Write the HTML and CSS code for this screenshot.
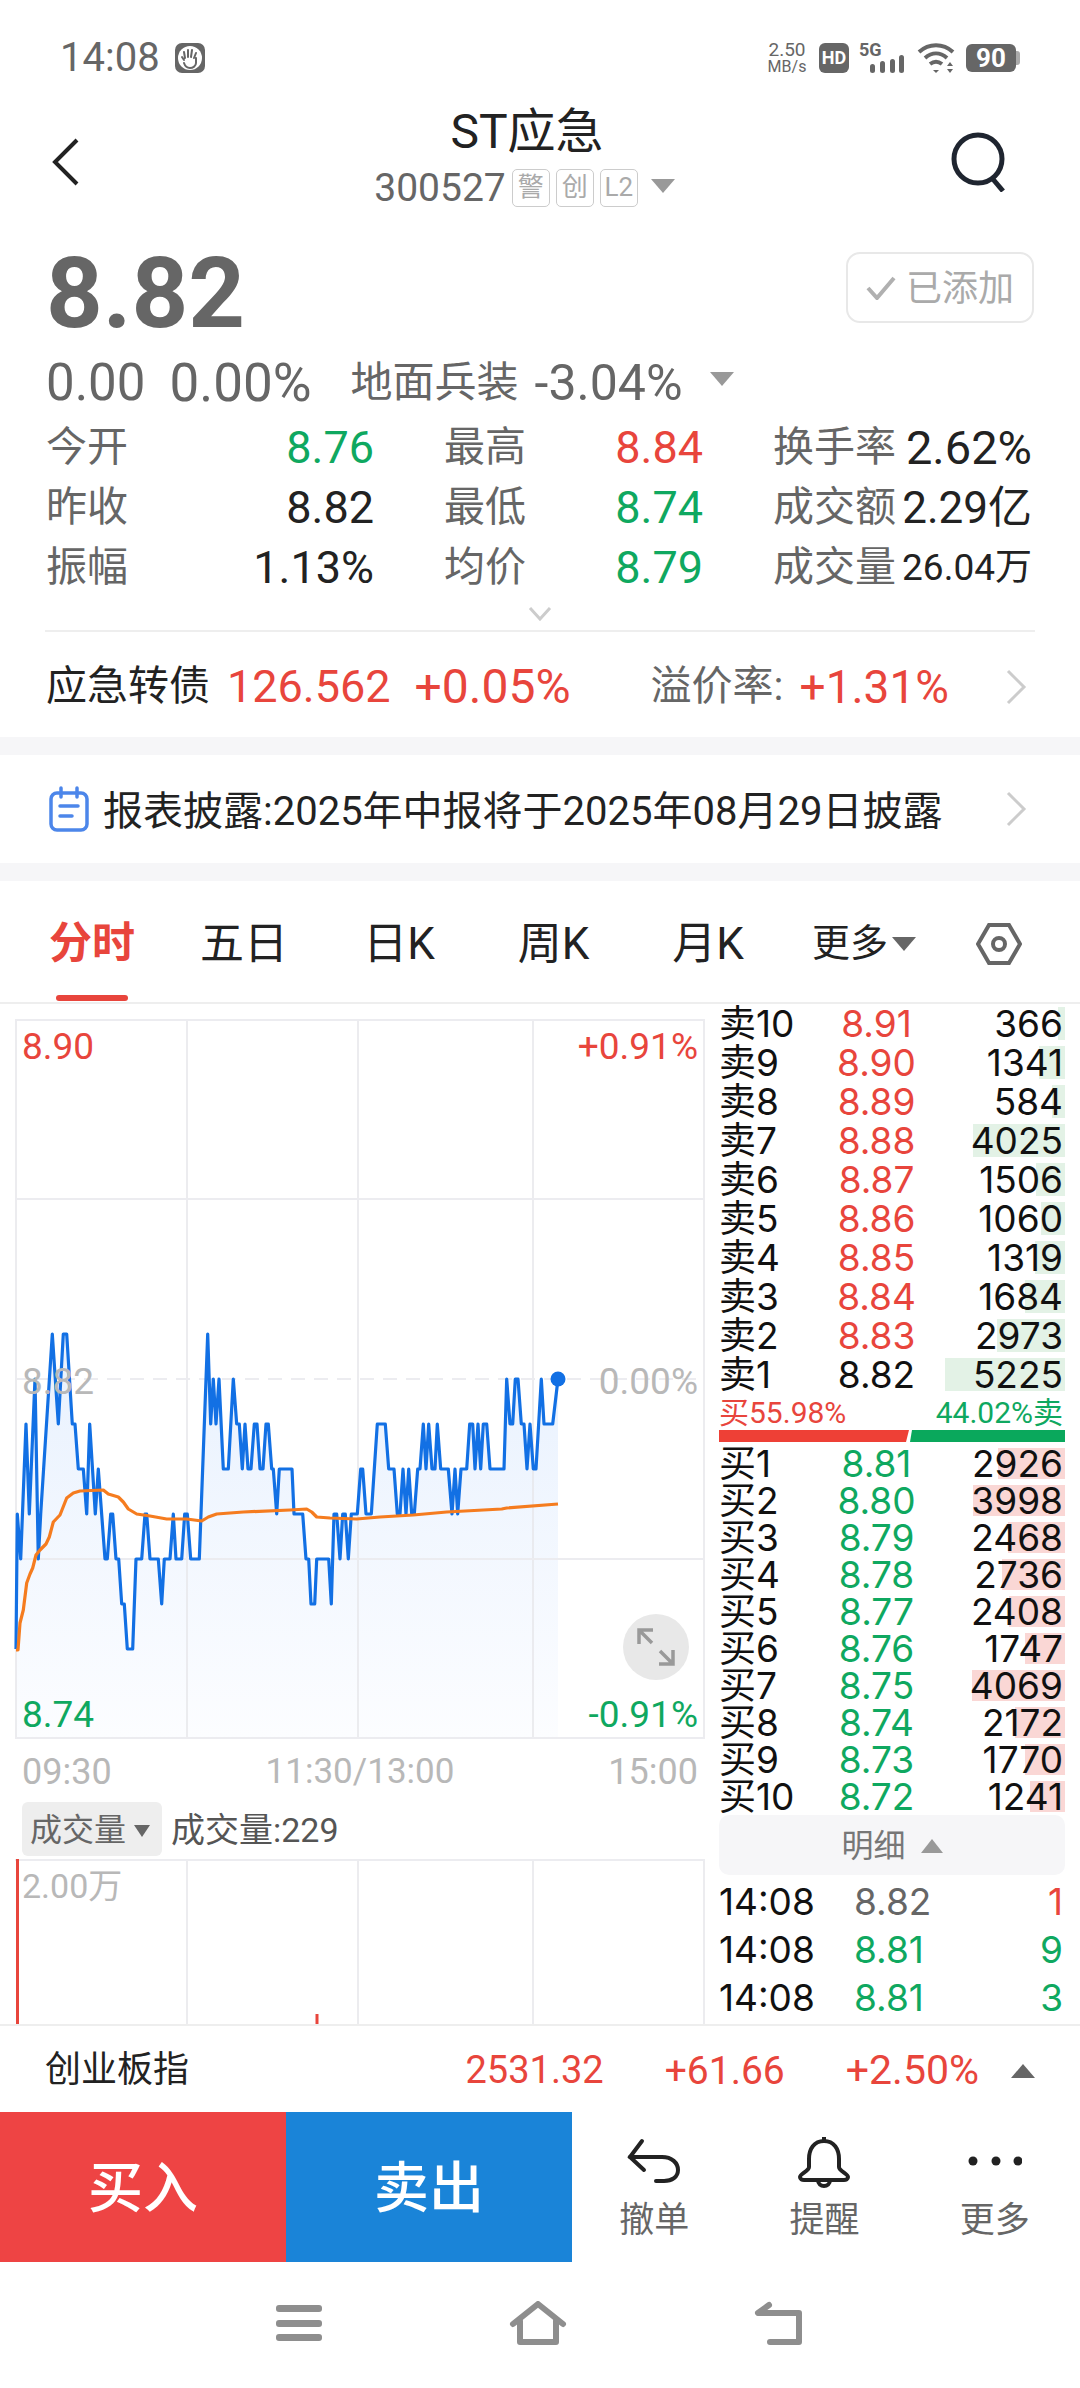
FILE: index.html
```html
<!DOCTYPE html>
<html lang="zh-CN">
<head>
  <meta charset="UTF-8">
  <meta name="viewport" content="width=device-width, initial-scale=1.0">
  <title>ST应急 300527</title>
  <link rel="stylesheet" href="styles.css">
</head>
<body>

  <!-- Status bar -->
  <div class="status-bar">
    <div class="status-left">
      <span class="clock">14:08</span>
      <svg class="hand-icon" width="30" height="30" viewBox="0 0 30 30">
        <rect width="30" height="30" rx="7" fill="#666"/>
        <circle cx="15" cy="15" r="12" fill="#fff"/>
        <path d="M9 17l-2-3M10 15l-1-6M13 14l0-7M16 14l1-7M19 15l2-5M21 15v5c0 3-3 5-6 5-3 0-5-2-6-5" fill="none" stroke="#666" stroke-width="2" stroke-linecap="round"/>
      </svg>
    </div>
    <div class="status-right">
      <div class="speed"><span>2.50</span><span>MB/s</span></div>
      <span class="hd">HD</span>
      <div class="signal">
        <span class="five-g">5G</span>
        <svg width="36" height="18" viewBox="0 0 36 18" fill="#666">
          <rect x="1" y="9" width="5" height="9" rx="2.5"/>
          <rect x="11" y="6" width="5" height="12" rx="2.5"/>
          <rect x="21" y="4" width="5" height="14" rx="2.5"/>
          <rect x="30" y="0" width="5" height="18" rx="2.5"/>
        </svg>
      </div>
      <svg class="wifi" width="38" height="30" viewBox="0 0 38 30" fill="none" stroke="#666" stroke-width="4">
        <path d="M2 9c10-9 24-9 34 0"/>
        <path d="M8 15c7-6 15-6 22 0"/>
        <path d="M13 21c4-3 8-3 12 0"/>
        <path d="M16 27l3 3 3-3z" fill="#666" stroke="none"/>
        <path d="M30 23l3-4 3 4zM30 26l3 4 3-4z" fill="#666" stroke="none"/>
      </svg>
      <div class="battery"><span class="battery-body">90</span><i class="battery-cap"></i></div>
    </div>
  </div>

  <!-- Title bar -->
  <header class="title-bar">
    <svg class="back" width="44" height="48" viewBox="0 0 44 48">
      <path d="M25 2L3 24l22 22" fill="none" stroke="#222" stroke-width="4"/>
    </svg>
    <div class="title-center">
      <div class="stock-name">ST应急</div>
      <div class="stock-code">
        <span>300527</span>
        <span class="tag">警</span>
        <span class="tag">创</span>
        <span class="tag">L2</span>
        <i class="tri tri-down code-tri"></i>
      </div>
    </div>
    <svg class="search" width="57" height="60" viewBox="0 0 57 60" fill="none" stroke="#1f2530" stroke-width="5">
      <circle cx="27" cy="27" r="24"/>
      <path d="M41 46l11 13"/>
    </svg>
  </header>

  <!-- Quote summary -->
  <section class="quote">
    <div class="price-row">
      <span class="last-price">8.82</span>
      <button class="added-btn">
        <svg width="30" height="24" viewBox="0 0 30 24"><path d="M2 12l9 10L28 2" fill="none" stroke="#b0b0b0" stroke-width="4"/></svg>
        <span class="added-text">已添加</span>
      </button>
    </div>
    <div class="change-row">
      <span class="chg">0.00</span>
      <span class="chg-pct">0.00%</span>
      <span class="sector">地面兵装</span>
      <span class="sector-pct">-3.04%</span>
      <i class="tri tri-down sector-tri"></i>
    </div>
    <div class="stats">
      <div class="stat"><span class="stat-label">今开</span><span class="green">8.76</span></div>
      <div class="stat"><span class="stat-label">最高</span><span class="red">8.84</span></div>
      <div class="stat"><span class="stat-label">换手率</span><span class="stat-pct">2.62%</span></div>
      <div class="stat"><span class="stat-label">昨收</span><span>8.82</span></div>
      <div class="stat"><span class="stat-label">最低</span><span class="green">8.74</span></div>
      <div class="stat"><span class="stat-label">成交额</span><span class="stat-mid">2.29亿</span></div>
      <div class="stat"><span class="stat-label">振幅</span><span>1.13%</span></div>
      <div class="stat"><span class="stat-label">均价</span><span class="green">8.79</span></div>
      <div class="stat"><span class="stat-label">成交量</span><span class="stat-small">26.04万</span></div>
    </div>
    <div class="more-stats">
      <svg width="24" height="14" viewBox="0 0 24 14"><path d="M2 1l10 11L22 1" fill="none" stroke="#ccc" stroke-width="3"/></svg>
    </div>
  </section>

  <!-- Convertible bond -->
  <section class="bond-row">
    <span class="bond-name">应急转债</span>
    <span class="red bond-price">126.562</span>
    <span class="red bond-pct">+0.05%</span>
    <span class="bond-label">溢价率:</span>
    <span class="red bond-premium">+1.31%</span>
    <svg class="chevron" width="22" height="36" viewBox="0 0 22 36"><path d="M3 2l16 16L3 34" fill="none" stroke="#ccc" stroke-width="3"/></svg>
  </section>

  <!-- Report notice -->
  <section class="notice-row">
    <svg width="42" height="46" viewBox="0 0 42 46" fill="none" stroke="#4c86ea" stroke-width="3.5" stroke-linecap="round">
      <rect x="3" y="7" width="36" height="37" rx="6"/>
      <path d="M13 2v9M29 2v9"/>
      <path d="M12 20h18M12 30h12"/>
    </svg>
    <span class="notice-text">报表披露:2025年中报将于2025年08月29日披露</span>
    <svg class="chevron" width="22" height="36" viewBox="0 0 22 36"><path d="M3 2l16 16L3 34" fill="none" stroke="#ccc" stroke-width="3"/></svg>
  </section>

  <!-- Period tabs -->
  <nav class="tabs">
    <span class="tab tab-active">分时</span>
    <span class="tab">五日</span>
    <span class="tab">日K</span>
    <span class="tab">周K</span>
    <span class="tab">月K</span>
    <span class="tab tab-more">更多<i class="tri tri-down more-tri"></i></span>
    <span class="tab">
      <svg width="46" height="42" viewBox="0 0 46 42" fill="none" stroke="#666" stroke-width="4">
        <path d="M13 2h20l11 19-11 19H13L2 21z"/>
        <circle cx="23" cy="21" r="6"/>
      </svg>
    </span>
  </nav>

  <section class="market">
    <div class="chart-col">
      <div class="plot">
        <svg width="700" height="720" viewBox="10 1019 700 720">
          <defs>
            <linearGradient id="areaFill" gradientUnits="userSpaceOnUse" x1="0" y1="1334" x2="0" y2="1738">
              <stop offset="0" stop-color="#e8f1fe"/>
              <stop offset="1" stop-color="#fcfdff"/>
            </linearGradient>
          </defs>
          <!-- area under the price line -->
          <polygon fill="url(#areaFill)" points="16,1738 16,1649 17.3,1514 20.7,1559 26,1424 29.3,1514 35,1379 38.3,1559 40.7,1514 52.3,1334 58.3,1424 63.3,1334 66.7,1334 72.3,1424 75,1424 78.3,1469 83.3,1469 86.7,1514 89.7,1424 95.3,1514 98.3,1469 105,1559 107.3,1559 110.7,1514 112.7,1514 116,1559 118.7,1559 121.7,1604 124.3,1604 127.3,1649 132.7,1649 136,1559 141.7,1559 145,1514 146.7,1514 150,1559 158.3,1559 161.7,1604 164.3,1559 170,1559 173.3,1514 176,1559 181.7,1559 184.7,1514 187.3,1514 190.7,1559 199.3,1559 207.7,1334 210.7,1424 213.3,1379 216,1424 219,1379 223.3,1469 228.3,1469 233.3,1379 236.7,1424 239.3,1424 242.3,1469 245,1424 248,1469 251,1469 254.3,1424 257,1424 260,1469 263,1469 266,1424 268.3,1424 271.7,1469 273.3,1469 276.7,1514 279.3,1469 292,1469 294,1514 302.7,1514 306,1559 308.7,1559 311,1604 314.7,1604 316.7,1559 328.7,1559 331.3,1604 334,1514 336.7,1514 340,1559 342.7,1514 345.3,1514 348.3,1559 351.3,1514 357.3,1514 360.7,1469 362.7,1469 366,1514 371.3,1514 377.3,1424 385.3,1424 388.7,1469 394,1469 397.3,1514 400,1514 403,1469 406,1514 408.7,1469 411.7,1514 414.3,1514 417.7,1469 420,1469 423.3,1424 426,1469 428.7,1424 432,1469 435,1469 437.3,1424 440.7,1469 448.3,1469 452,1514 455,1469 457.7,1514 461,1469 466.7,1469 469.7,1424 472.7,1424 475,1469 478,1424 480.7,1469 483.3,1424 486.7,1424 490,1469 504,1469 506.7,1379 510,1424 512.7,1424 515.3,1379 518,1379 521.3,1424 524,1424 527,1469 530,1424 533.3,1469 536,1469 541.3,1379 544,1424 552.7,1424 558,1379 558,1738"/>
          <!-- grid -->
          <g stroke="#e6e6ea" stroke-width="1.5">
            <path d="M16 1020V1738M187 1020V1738M358 1020V1738M533 1020V1738M704 1020V1738"/>
          </g>
          <g stroke="#ececf0" stroke-width="2">
            <path d="M15 1020H705M15 1199H705M15 1559H705M15 1738H705"/>
            <path d="M15 1379H705" stroke-dasharray="14 9"/>
          </g>
          <!-- price -->
          <polyline fill="none" stroke="#1270e4" stroke-width="3.2" stroke-linejoin="round" points="16,1649 17.3,1514 20.7,1559 26,1424 29.3,1514 35,1379 38.3,1559 40.7,1514 52.3,1334 58.3,1424 63.3,1334 66.7,1334 72.3,1424 75,1424 78.3,1469 83.3,1469 86.7,1514 89.7,1424 95.3,1514 98.3,1469 105,1559 107.3,1559 110.7,1514 112.7,1514 116,1559 118.7,1559 121.7,1604 124.3,1604 127.3,1649 132.7,1649 136,1559 141.7,1559 145,1514 146.7,1514 150,1559 158.3,1559 161.7,1604 164.3,1559 170,1559 173.3,1514 176,1559 181.7,1559 184.7,1514 187.3,1514 190.7,1559 199.3,1559 207.7,1334 210.7,1424 213.3,1379 216,1424 219,1379 223.3,1469 228.3,1469 233.3,1379 236.7,1424 239.3,1424 242.3,1469 245,1424 248,1469 251,1469 254.3,1424 257,1424 260,1469 263,1469 266,1424 268.3,1424 271.7,1469 273.3,1469 276.7,1514 279.3,1469 292,1469 294,1514 302.7,1514 306,1559 308.7,1559 311,1604 314.7,1604 316.7,1559 328.7,1559 331.3,1604 334,1514 336.7,1514 340,1559 342.7,1514 345.3,1514 348.3,1559 351.3,1514 357.3,1514 360.7,1469 362.7,1469 366,1514 371.3,1514 377.3,1424 385.3,1424 388.7,1469 394,1469 397.3,1514 400,1514 403,1469 406,1514 408.7,1469 411.7,1514 414.3,1514 417.7,1469 420,1469 423.3,1424 426,1469 428.7,1424 432,1469 435,1469 437.3,1424 440.7,1469 448.3,1469 452,1514 455,1469 457.7,1514 461,1469 466.7,1469 469.7,1424 472.7,1424 475,1469 478,1424 480.7,1469 483.3,1424 486.7,1424 490,1469 504,1469 506.7,1379 510,1424 512.7,1424 515.3,1379 518,1379 521.3,1424 524,1424 527,1469 530,1424 533.3,1469 536,1469 541.3,1379 544,1424 552.7,1424 558,1379"/>
          <!-- average -->
          <polyline fill="none" stroke="#f57c1f" stroke-width="3.2" stroke-linejoin="round" points="16,1650 18,1650 20,1623 23.3,1610 26.7,1583 30,1574 32.7,1568 36,1555 40,1550 46,1544 49.3,1537 53.3,1522 60,1515 66.7,1498 73.3,1493 80,1491 103.3,1490 108.3,1494 118.3,1497 123.3,1502 128.3,1509 136.7,1514 150,1516 166.7,1519 186.7,1519 201.7,1521 208.3,1517 216.7,1514 243.3,1512 290,1510 306.7,1509 311.7,1512 316.7,1517 330,1518 356.7,1519 380,1517 413.3,1515 446.7,1512 501.7,1509 506.7,1508 558,1504"/>
          <circle cx="558" cy="1379" r="7.5" fill="#1270e4"/>
        </svg>
        <span class="axis-label top-left red">8.90</span>
        <span class="axis-label top-right red">+0.91%</span>
        <span class="axis-label mid-left muted">8.82</span>
        <span class="axis-label mid-right muted">0.00%</span>
        <span class="axis-label low-left green">8.74</span>
        <span class="axis-label low-right green">-0.91%</span>
        <div class="expand-btn">
          <svg width="38" height="38" viewBox="0 0 38 38" fill="none" stroke="#999" stroke-width="3.5">
            <path d="M2 16V2h14M2 2l13 13"/>
            <path d="M36 22v14H22M36 36L23 23"/>
          </svg>
        </div>
      </div>
      <div class="time-axis">
        <span>09:30</span>
        <span class="time-mid">11:30/13:00</span>
        <span>15:00</span>
      </div>
      <div class="vol-head">
        <span class="vol-select">成交量<i class="tri tri-down vol-tri"></i></span>
        <span class="vol-value">成交量:229</span>
      </div>
      <div class="vol-plot">
        <svg width="700" height="165" viewBox="10 1859 700 165">
          <path d="M187 1859V2024M358 1859V2024M533 1859V2024M704 1859V2024" stroke="#e6e6ea" stroke-width="1.5"/>
          <path d="M15 1860H705" stroke="#ececf0" stroke-width="2"/>
          <path d="M17.5 1859V2024" stroke="#e8453c" stroke-width="3"/>
          <path d="M317 2014V2024" stroke="#e8453c" stroke-width="3"/>
        </svg>
        <span class="vol-max">2.00万</span>
      </div>
    </div>

    <div class="book">
      <ul class="asks">
        <li class="book-row"><i class="qty-bar" style="width:7px"></i><span class="lvl">卖10</span><span class="px red">8.91</span><span class="qty">366</span></li>
        <li class="book-row"><i class="qty-bar" style="width:26px"></i><span class="lvl">卖9</span><span class="px red">8.90</span><span class="qty">1341</span></li>
        <li class="book-row"><i class="qty-bar" style="width:13px"></i><span class="lvl">卖8</span><span class="px red">8.89</span><span class="qty">584</span></li>
        <li class="book-row"><i class="qty-bar" style="width:92px"></i><span class="lvl">卖7</span><span class="px red">8.88</span><span class="qty">4025</span></li>
        <li class="book-row"><i class="qty-bar" style="width:29px"></i><span class="lvl">卖6</span><span class="px red">8.87</span><span class="qty">1506</span></li>
        <li class="book-row"><i class="qty-bar" style="width:24px"></i><span class="lvl">卖5</span><span class="px red">8.86</span><span class="qty">1060</span></li>
        <li class="book-row"><i class="qty-bar" style="width:30px"></i><span class="lvl">卖4</span><span class="px red">8.85</span><span class="qty">1319</span></li>
        <li class="book-row"><i class="qty-bar" style="width:40px"></i><span class="lvl">卖3</span><span class="px red">8.84</span><span class="qty">1684</span></li>
        <li class="book-row"><i class="qty-bar" style="width:68px"></i><span class="lvl">卖2</span><span class="px red">8.83</span><span class="qty">2973</span></li>
        <li class="book-row"><i class="qty-bar" style="width:120px"></i><span class="lvl">卖1</span><span class="px">8.82</span><span class="qty">5225</span></li>
      </ul>
      <div class="ratio-text">
        <span class="red">买55.98%</span>
        <span class="green">44.02%卖</span>
      </div>
      <div class="ratio-bar">
        <i class="ratio-buy" style="width:190px"></i>
        <i class="ratio-sell"></i>
      </div>
      <ul class="bids">
        <li class="book-row"><i class="qty-bar" style="width:67px"></i><span class="lvl">买1</span><span class="px green">8.81</span><span class="qty">2926</span></li>
        <li class="book-row"><i class="qty-bar" style="width:92px"></i><span class="lvl">买2</span><span class="px green">8.80</span><span class="qty">3998</span></li>
        <li class="book-row"><i class="qty-bar" style="width:57px"></i><span class="lvl">买3</span><span class="px green">8.79</span><span class="qty">2468</span></li>
        <li class="book-row"><i class="qty-bar" style="width:63px"></i><span class="lvl">买4</span><span class="px green">8.78</span><span class="qty">2736</span></li>
        <li class="book-row"><i class="qty-bar" style="width:56px"></i><span class="lvl">买5</span><span class="px green">8.77</span><span class="qty">2408</span></li>
        <li class="book-row"><i class="qty-bar" style="width:40px"></i><span class="lvl">买6</span><span class="px green">8.76</span><span class="qty">1747</span></li>
        <li class="book-row"><i class="qty-bar" style="width:93px"></i><span class="lvl">买7</span><span class="px green">8.75</span><span class="qty">4069</span></li>
        <li class="book-row"><i class="qty-bar" style="width:50px"></i><span class="lvl">买8</span><span class="px green">8.74</span><span class="qty">2172</span></li>
        <li class="book-row"><i class="qty-bar" style="width:40px"></i><span class="lvl">买9</span><span class="px green">8.73</span><span class="qty">1770</span></li>
        <li class="book-row"><i class="qty-bar" style="width:35px"></i><span class="lvl">买10</span><span class="px green">8.72</span><span class="qty">1241</span></li>
      </ul>
      <div class="detail-toggle">明细<i class="tri tri-up detail-tri"></i></div>
      <div class="trades">
        <div class="trade"><span class="trade-time">14:08</span><span class="trade-px gray">8.82</span><span class="trade-qty red">1</span></div>
        <div class="trade"><span class="trade-time">14:08</span><span class="trade-px green">8.81</span><span class="trade-qty green">9</span></div>
        <div class="trade"><span class="trade-time">14:08</span><span class="trade-px green">8.81</span><span class="trade-qty green">3</span></div>
      </div>
    </div>
  </section>

  <!-- Index ticker -->
  <section class="index-row">
    <span class="index-name">创业板指</span>
    <span class="red index-first">2531.32</span>
    <span class="red index-chg">+61.66</span>
    <span class="red index-pct">+2.50%</span>
    <i class="tri tri-up index-tri"></i>
  </section>

  <!-- Trade actions -->
  <section class="actions">
    <button class="trade-btn buy">买入</button>
    <button class="trade-btn sell">卖出</button>
    <div class="tools">
      <div class="tool">
        <svg width="54" height="44" viewBox="0 0 54 44" fill="none" stroke="#222" stroke-width="4" stroke-linecap="round">
          <path d="M15 2L3 18l14 13"/>
          <path d="M3 18h32c10 0 16 6 16 13s-6 11-14 11h-8"/>
        </svg>
        <span>撤单</span>
      </div>
      <div class="tool">
        <svg width="52" height="54" viewBox="0 0 52 54" fill="none" stroke="#222" stroke-width="4">
          <path d="M26 7c-10 0-15 8-15 18v8c0 4-9 7-9 10 0 2 2 3 4 3h40c2 0 4-1 4-3 0-3-9-6-9-10v-8c0-10-5-18-15-18z"/>
          <path d="M26 7V3"/>
          <path d="M20 46c0 4 3 6 6 6s6-2 6-6"/>
        </svg>
        <span>提醒</span>
      </div>
      <div class="tool">
        <svg width="54" height="44" viewBox="0 0 54 44" fill="#222">
          <circle cx="5" cy="22" r="4.5"/>
          <circle cx="28" cy="22" r="4.5"/>
          <circle cx="50" cy="22" r="4.5"/>
        </svg>
        <span>更多</span>
      </div>
    </div>
  </section>

  <!-- System navigation -->
  <footer class="sys-nav">
    <svg width="46" height="36" viewBox="0 0 46 36" fill="#8e8e8e">
      <rect width="46" height="7" rx="3"/>
      <rect y="15" width="46" height="7" rx="3"/>
      <rect y="29" width="46" height="7" rx="3"/>
    </svg>
    <svg width="58" height="44" viewBox="0 0 58 44" fill="none" stroke="#8e8e8e" stroke-width="6" stroke-linejoin="round" stroke-linecap="round">
      <path d="M4 23L29 3l25 20"/>
      <path d="M11 20v21h36V20"/>
    </svg>
    <svg width="50" height="44" viewBox="0 0 50 44" fill="none" stroke="#8e8e8e" stroke-width="6" stroke-linejoin="round" stroke-linecap="round">
      <path d="M15 4L4 12h41v29H16"/>
    </svg>
  </footer>

</body>
</html>
```

FILE: styles.css
```css
* {
  box-sizing: border-box;
}

html, body {
  margin: 0;
  padding: 0;
  width: 1080px;
  height: 2388px;
  overflow: hidden;
  background-color: #fff;
  color: #222;
  font-family: Roboto, "Noto Sans CJK SC", sans-serif;
  line-height: 1.1;
}

ul {
  list-style: none;
  margin: 0;
  padding: 0;
}

button {
  font-family: inherit;
  line-height: 1.1;
  border: none;
  cursor: pointer;
}

.red { color: #e8453c; }
.green { color: #0fa860; }
.gray { color: #666; }
.muted { color: #b8b8b8; }

/* little triangles used all over */
.tri {
  display: inline-block;
  width: 0;
  height: 0;
  border-left: 12px solid transparent;
  border-right: 12px solid transparent;
}

.tri-down { border-top: 14px solid #999; }
.tri-up { border-bottom: 14px solid #999; }

/* status bar */
.status-bar {
  height: 84px;
  padding: 32px 60px 0;
  display: flex;
  justify-content: space-between;
  align-items: center;
}

.status-left {
  display: flex;
  align-items: center;
  gap: 15px;
}

.clock {
  font-size: 40px;
  color: #666;
}

.status-right {
  display: flex;
  align-items: center;
  color: #666;
}

.speed {
  display: flex;
  flex-direction: column;
  align-items: center;
  font-size: 16px;
  line-height: 16px;
  width: 42px;
}

.speed span:first-child {
  font-size: 19px;
  line-height: 18px;
}

.hd {
  margin-left: 11px;
  width: 30px;
  height: 30px;
  line-height: 30px;
  background-color: #666;
  color: #fff;
  border-radius: 6px;
  font-size: 18px;
  font-weight: 700;
  text-align: center;
}

.signal {
  margin-left: 10px;
  width: 46px;
  height: 30px;
  position: relative;
}

.five-g {
  position: absolute;
  left: 0;
  top: -2px;
  font-size: 18px;
  line-height: 18px;
  font-weight: 700;
}

.signal svg {
  position: absolute;
  left: 10px;
  top: 12px;
}

.wifi {
  margin-left: 12px;
}

.battery {
  margin-left: 11px;
  display: flex;
  align-items: center;
}

.battery-body {
  width: 50px;
  height: 28px;
  line-height: 28px;
  background-color: #666;
  color: #fff;
  border-radius: 6px;
  font-size: 26px;
  font-weight: 700;
  text-align: center;
}

.battery-cap {
  width: 4px;
  height: 14px;
  background-color: #aaa;
  border-radius: 0 3px 3px 0;
}

/* title bar */
.title-bar {
  height: 154px;
  padding: 20px 72px 0 52px;
  display: flex;
  justify-content: space-between;
  align-items: flex-start;
}

.back {
  margin-top: 34px;
}

.search {
  margin-top: 28px;
}

.title-center {
  flex: 1;
  padding-left: 2px;
  text-align: center;
}

.stock-name {
  margin-top: 3px;
  padding-left: 5px;
  font-size: 48px;
  line-height: 50px;
  color: #222;
}

.stock-code {
  margin-top: 9px;
  height: 44px;
  display: flex;
  justify-content: center;
  align-items: center;
  gap: 6px;
  font-size: 39px;
  color: #666;
}

.tag {
  width: 38px;
  height: 38px;
  line-height: 34px;
  border: 1.5px solid #ccc;
  border-radius: 5px;
  font-size: 26px;
  color: #aaa;
  text-align: center;
}

.code-tri {
  margin-left: 7px;
  margin-bottom: 4px;
}

/* quote summary */
.quote {
  padding: 0 46px;
}

.price-row {
  height: 110px;
  display: flex;
  justify-content: space-between;
  align-items: center;
}

.last-price {
  font-size: 99px;
  line-height: 110px;
  font-weight: 700;
  color: #666;
}

.added-btn {
  width: 188px;
  height: 71px;
  margin-bottom: 11px;
  background-color: #fff;
  border: 2px solid #e8e8e8;
  border-radius: 14px;
  display: flex;
  align-items: center;
  justify-content: center;
  gap: 10px;
  font-size: 36px;
  color: #aaa;
}

.added-text {
  padding-top: 4px;
}

.change-row {
  height: 70px;
  display: flex;
  align-items: center;
  color: #666;
}

.chg {
  font-size: 51px;
}

.chg-pct {
  margin-left: 24px;
  font-size: 53px;
}

.sector {
  margin-left: 39px;
  font-size: 42px;
}

.sector-pct {
  margin-left: 16px;
  font-size: 50px;
}

.sector-tri {
  margin-left: 27px;
  margin-bottom: 8px;
}

.stats {
  display: grid;
  grid-template-columns: 328px 259px 259px;
  column-gap: 70px;
  font-size: 45px;
}

.stat {
  height: 60px;
  display: flex;
  justify-content: space-between;
  align-items: center;
}

.stat-label {
  font-size: 41px;
  color: #666;
}

.stat-pct {
  font-size: 47px;
}

.stat-mid {
  font-size: 44px;
}

.stat-small {
  font-size: 37px;
}

.more-stats {
  height: 32px;
  display: flex;
  justify-content: center;
  align-items: center;
}

/* bond row */
.bond-row {
  margin: 0 45px;
  height: 107px;
  padding-top: 5px;
  border-top: 2px solid #eee;
  display: flex;
  align-items: center;
  font-size: 46px;
}

.bond-name {
  font-size: 41px;
  margin-left: 1px;
}

.bond-price {
  margin-left: 17px;
  font-size: 45px;
}

.bond-pct {
  margin-left: 24px;
  font-size: 48px;
}

.bond-label {
  margin-left: 80px;
  font-size: 41px;
  color: #666;
}

.bond-premium {
  margin-left: 16px;
}

.bond-row .chevron {
  margin-left: auto;
  margin-right: 8px;
}

/* notice row */
.notice-row {
  height: 144px;
  padding: 0 53px 0 48px;
  border-top: 18px solid #f6f6f8;
  border-bottom: 18px solid #f6f6f8;
  display: flex;
  align-items: center;
}

.notice-text {
  margin-left: 13px;
  padding-top: 5px;
  font-size: 40px;
  white-space: nowrap;
}

.notice-row .chevron {
  margin-left: auto;
}

/* tabs */
.tabs {
  height: 123px;
  padding-left: 16px;
  border-bottom: 2px solid #eee;
  display: grid;
  grid-template-columns: 152px 152px 158px 151px 158px 154px 116px;
  align-items: center;
  font-size: 44px;
}

.tab {
  height: 100%;
  padding-top: 5px;
  display: flex;
  align-items: center;
  justify-content: center;
  position: relative;
}

.tab-active {
  color: #e8453c;
  font-size: 43px;
  font-weight: 700;
}

.tab-active::after {
  content: "";
  position: absolute;
  left: 40px;
  bottom: 1px;
  width: 72px;
  height: 6px;
  background-color: #e8453c;
  border-radius: 3px;
}

.tab-more {
  font-size: 38px;
}

.more-tri {
  margin-left: 4px;
  border-top-color: #666;
}

/* chart and order book */
.market {
  height: 1020px;
  display: flex;
}

.chart-col {
  width: 719px;
  padding-top: 15px;
  padding-left: 10px;
}

.plot {
  width: 700px;
  height: 720px;
  position: relative;
}

.plot svg {
  display: block;
}

.axis-label {
  position: absolute;
  font-size: 37px;
  line-height: 40px;
}

.top-left { left: 12px; top: 8px; }
.top-right { right: 12px; top: 8px; }
.mid-left { left: 12px; top: 343px; }
.mid-right { right: 12px; top: 343px; }
.low-left { left: 12px; top: 676px; }
.low-right { right: 12px; top: 676px; }

.expand-btn {
  position: absolute;
  left: 613px;
  top: 595px;
  width: 66px;
  height: 66px;
  border-radius: 50%;
  background-color: #e8e8e8;
  display: flex;
  align-items: center;
  justify-content: center;
}

.time-axis {
  width: 700px;
  height: 63px;
  padding: 4px 12px 0;
  display: flex;
  justify-content: space-between;
  align-items: center;
  font-size: 36px;
  color: #b8b8b8;
}

.time-mid {
  font-size: 35px;
}

.vol-head {
  height: 54px;
  padding-left: 12px;
  display: flex;
  align-items: center;
  gap: 9px;
}

.vol-select {
  width: 140px;
  height: 54px;
  padding: 4px 0 0 8px;
  background-color: #eee;
  border-radius: 6px;
  display: flex;
  align-items: center;
  font-size: 32px;
  color: #666;
}

.vol-tri {
  margin-left: 8px;
  border-left-width: 8px;
  border-right-width: 8px;
  border-top: 12px solid #666;
}

.vol-value {
  margin-top: 4px;
  font-size: 34px;
  color: #555;
}

.vol-plot {
  margin-top: 3px;
  width: 700px;
  height: 165px;
  position: relative;
}

.vol-plot svg {
  display: block;
}

.vol-max {
  position: absolute;
  left: 12px;
  top: 7px;
  font-size: 34px;
  line-height: 40px;
  color: #b8b8b8;
}

.book {
  width: 346px;
  font-family: Inter, "Noto Sans CJK SC", sans-serif;
  font-size: 37px;
}

.book-row {
  position: relative;
  display: flex;
  align-items: center;
  color: #111;
  line-height: 1;
}

.asks .book-row { height: 39px; }
.bids .book-row { height: 37px; }

.qty-bar {
  position: absolute;
  top: 3px;
  bottom: 3px;
  right: 0;
}

.asks .qty-bar { background-color: #e3f2e6; }
.bids .qty-bar { background-color: #fad7d5; }

.lvl {
  position: relative;
  width: 101px;
  white-space: nowrap;
}

.px {
  position: relative;
  width: 113px;
  text-align: center;
}

.qty {
  position: relative;
  flex: 1;
  padding-right: 2px;
  text-align: right;
}

.ratio-text {
  height: 36px;
  padding: 0 2px 0 0;
  display: flex;
  justify-content: space-between;
  align-items: center;
  font-family: Roboto, "Noto Sans CJK SC", sans-serif;
  font-size: 30px;
}

.ratio-bar {
  height: 12px;
  margin-bottom: 3px;
  display: flex;
}

.ratio-buy {
  display: block;
  height: 12px;
  background-color: #ee4036;
  clip-path: polygon(0 0, 100% 0, calc(100% - 3px) 100%, 0 100%);
}

.ratio-sell {
  display: block;
  flex: 1;
  height: 12px;
  margin-left: 1px;
  background-color: #0aa85c;
  clip-path: polygon(2px 0, 100% 0, 100% 100%, 0 100%);
}

.detail-toggle {
  height: 60px;
  padding-top: 2px;
  background-color: #f6f6f8;
  border-radius: 10px;
  display: flex;
  align-items: center;
  justify-content: center;
  gap: 15px;
  font-size: 32px;
  color: #777;
}

.detail-tri {
  border-left-width: 11px;
  border-right-width: 11px;
}

.trades {
  margin-top: 3px;
  font-size: 37px;
}

.trade {
  height: 48px;
  display: flex;
  align-items: center;
  color: #111;
}

.trade-time {
  width: 135px;
}

.trade-qty {
  margin-left: auto;
  padding-right: 2px;
}

/* index ticker */
.index-row {
  height: 88px;
  padding: 4px 45px 0 45px;
  border-top: 2px solid #eee;
  display: flex;
  align-items: center;
  gap: 61px;
  font-size: 38px;
}

.index-name {
  font-size: 36px;
}

.index-first {
  margin-left: auto;
}

.index-chg {
  font-size: 39px;
}

.index-pct {
  font-size: 41px;
}

.index-tri {
  margin-left: -29px;
  border-bottom-color: #666;
}

/* buy / sell bar */
.actions {
  height: 150px;
  display: flex;
}

.trade-btn {
  width: 286px;
  padding-top: 3px;
  color: #fff;
  font-size: 55px;
  font-weight: 500;
}

.buy { background-color: #ee4444; }
.sell { background-color: #1a84d8; }

.tools {
  flex: 1;
  margin-left: -3px;
  display: grid;
  grid-template-columns: repeat(3, 1fr);
}

.tool {
  display: flex;
  flex-direction: column;
  align-items: center;
  justify-content: center;
  gap: 14px;
  font-size: 35px;
  color: #666;
}

.tool svg {
  height: 54px;
}

.sys-nav {
  height: 126px;
  padding-bottom: 5px;
  display: flex;
  justify-content: center;
  align-items: center;
  gap: 187px;
}
```
